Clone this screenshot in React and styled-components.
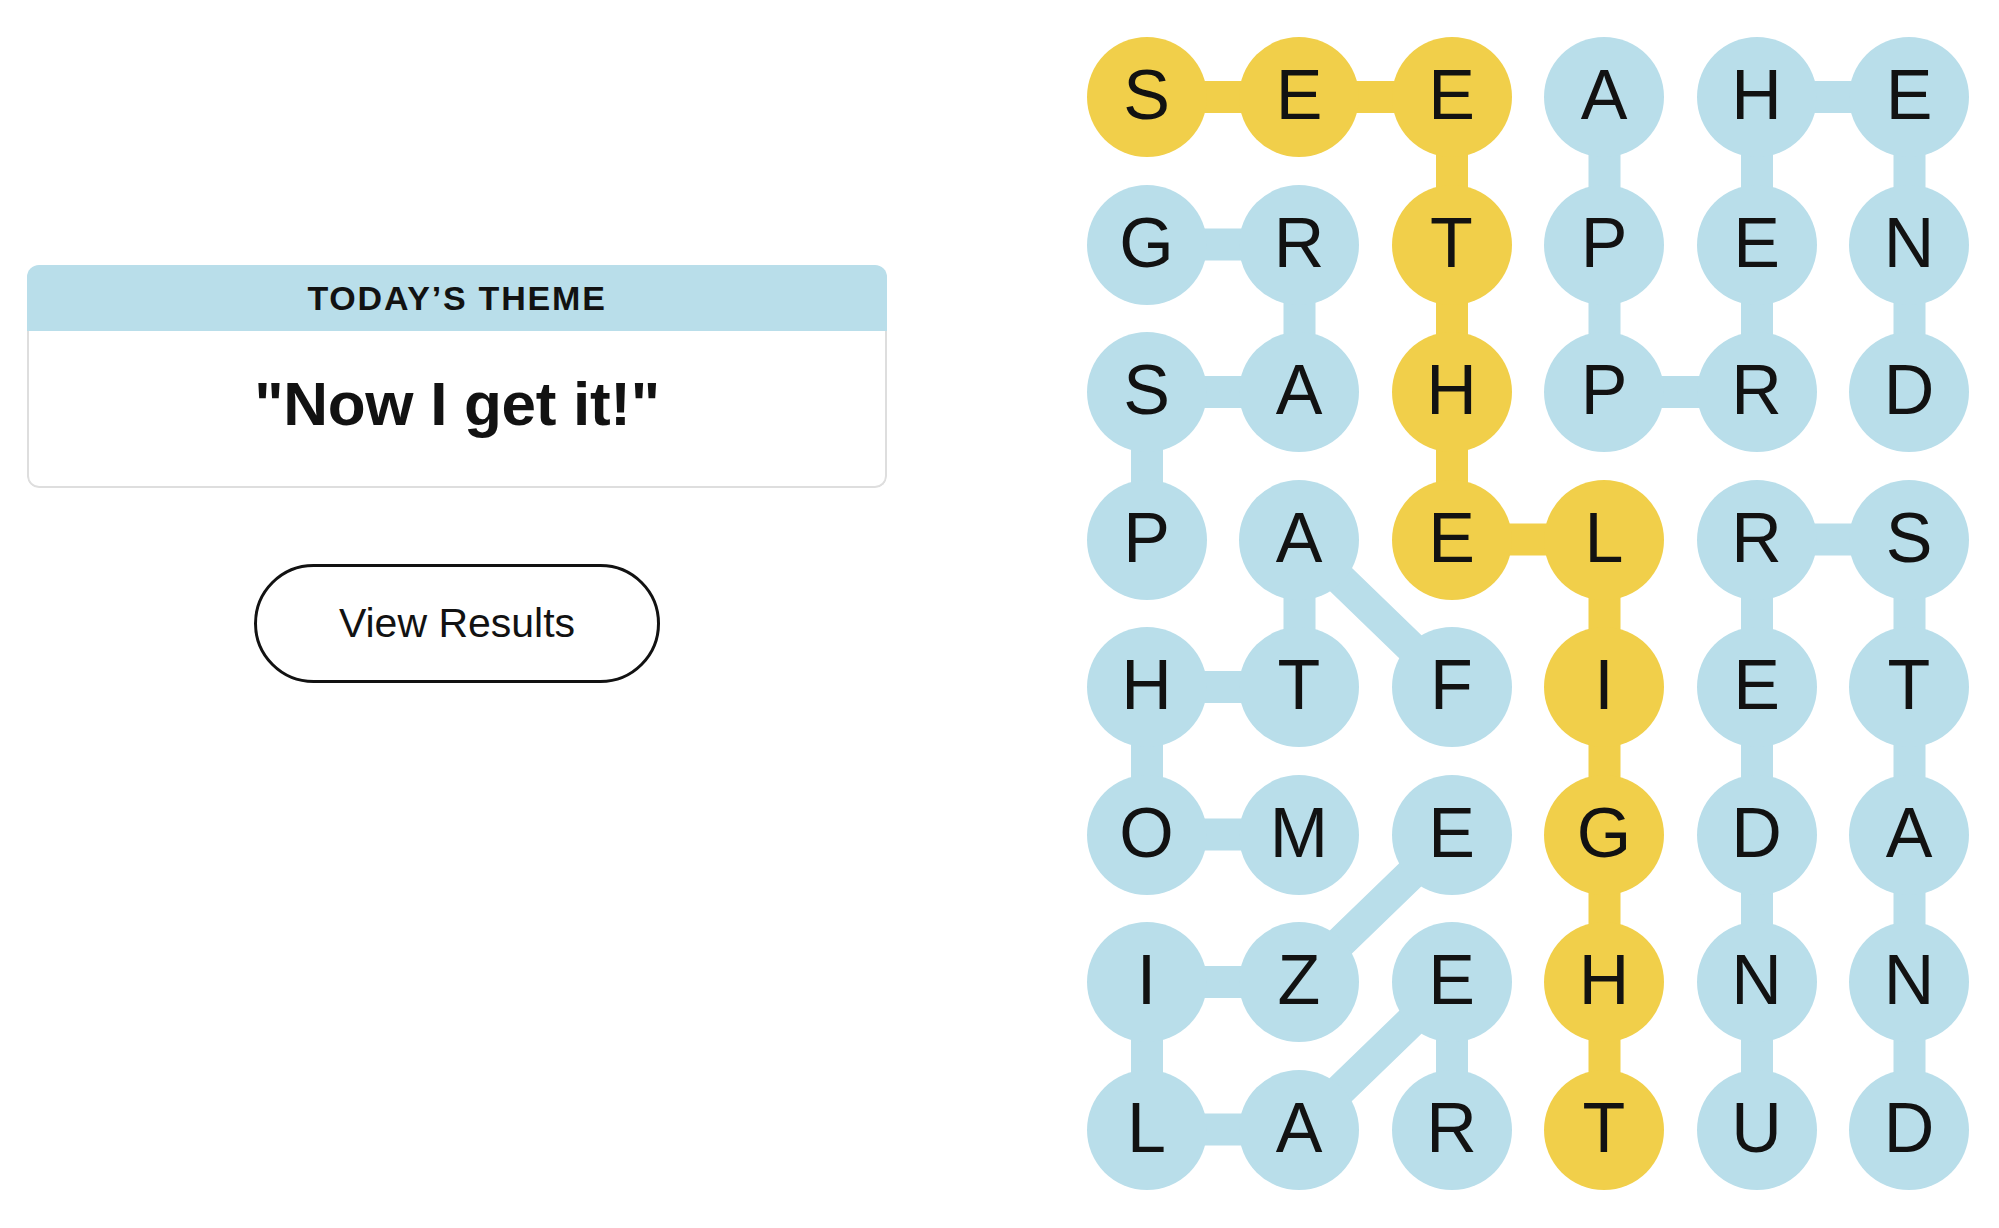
import React from 'react'
import styled, { createGlobalStyle } from 'styled-components'

const BLUE = '#b9deea'
const YELLOW = '#f1cf4a'
const INK = '#121212'

const COL = 120
const GAP_X = 32.5
const GAP_Y = 27.5

const letters = [
  'SEEAHE',
  'GRTPEN',
  'SAHPRD',
  'PAELRS',
  'HTFIET',
  'OMEGDA',
  'IZEHNN',
  'LARTUD',
]

// words as [row, col] paths
const spangram = [[0,0],[0,1],[0,2],[1,2],[2,2],[3,2],[3,3],[4,3],[5,3],[6,3],[7,3]]
const words = [
  [[1,0],[1,1],[2,1],[2,0],[3,0]],
  [[4,2],[3,1],[4,1],[4,0],[5,0],[5,1]],
  [[7,2],[6,2],[7,1],[7,0],[6,0],[6,1],[5,2]],
  [[0,3],[1,3],[2,3],[2,4],[1,4],[0,4],[0,5],[1,5],[2,5]],
  [[7,4],[6,4],[5,4],[4,4],[3,4],[3,5],[4,5],[5,5],[6,5],[7,5]],
]

const isSpan = (r, c) => spangram.some(([a, b]) => a === r && b === c)
const pt = ([r, c]) => `${COL / 2 + c * (COL + GAP_X)},${COL / 2 + r * (COL + GAP_Y)}`

const Global = createGlobalStyle`
  body {
    margin: 0;
    background: #fff;
    font-family: "Liberation Sans", Arial, sans-serif;
    color: ${INK};
  }
`

const Page = styled.div`
  display: flex;
  justify-content: space-between;
  align-items: flex-start;
  padding: 37px 30px 0 27px;
  height: 1228px;
  box-sizing: border-box;
`

const Side = styled.div`
  width: 860px;
  padding-top: 228px;
  display: flex;
  flex-direction: column;
  align-items: center;
`

const Card = styled.div`
  width: 100%;
  border-radius: 12px;
  overflow: hidden;
`

const CardHead = styled.div`
  height: 66px;
  background: ${BLUE};
  display: flex;
  align-items: center;
  justify-content: center;
  font-family: "Liberation Sans", Arial, sans-serif;
  font-weight: 700;
  font-size: 34px;
  letter-spacing: 1.8px;
  text-transform: uppercase;
`

const CardBody = styled.div`
  height: 157px;
  box-sizing: border-box;
  border: 2px solid #dedede;
  border-top: 0;
  border-radius: 0 0 12px 12px;
  display: flex;
  align-items: center;
  justify-content: center;
  padding-bottom: 10px;
  font-weight: 700;
  font-size: 62px;
  letter-spacing: -0.3px;
`

const ResultsButton = styled.button`
  margin-top: 76px;
  width: 406px;
  height: 119px;
  border: 3px solid ${INK};
  border-radius: 60px;
  background: #fff;
  font-family: "Liberation Sans", Arial, sans-serif;
  font-size: 41px;
  color: ${INK};
  cursor: pointer;
`

const Board = styled.div`
  position: relative;
  display: grid;
  grid-template-columns: repeat(6, ${COL}px);
  grid-auto-rows: ${COL}px;
  column-gap: ${GAP_X}px;
  row-gap: ${GAP_Y}px;
`

const Links = styled.svg`
  position: absolute;
  inset: 0;
  width: 100%;
  height: 100%;
  overflow: visible;
`

const Cell = styled.div`
  position: relative;
  width: ${COL}px;
  height: ${COL}px;
  border-radius: 50%;
  background: ${p => (p.$span ? YELLOW : BLUE)};
  display: flex;
  align-items: center;
  justify-content: center;
  font-size: 70px;
  line-height: 1;
  padding-bottom: 4px;
  box-sizing: border-box;
`

export default function App() {
  return (
    <>
      <Global />
      <Page>
        <Side>
          <Card>
            <CardHead>Today’s Theme</CardHead>
            <CardBody>"Now I get it!"</CardBody>
          </Card>
          <ResultsButton>View Results</ResultsButton>
        </Side>
        <Board>
          <Links>
            <polyline points={spangram.map(pt).join(' ')} fill="none" stroke={YELLOW} strokeWidth="32" />
            {words.map((w, i) => (
              <polyline key={i} points={w.map(pt).join(' ')} fill="none" stroke={BLUE} strokeWidth="32" />
            ))}
          </Links>
          {letters.map((row, r) =>
            row.split('').map((ch, c) => (
              <Cell key={`${r}-${c}`} $span={isSpan(r, c)}>{ch}</Cell>
            ))
          )}
        </Board>
      </Page>
    </>
  )
}
